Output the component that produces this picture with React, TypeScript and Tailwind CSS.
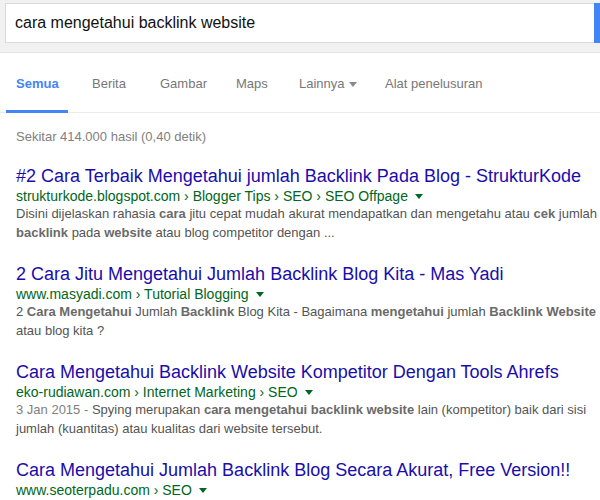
import React from "react";

const Arrow = ({ color }: { color: string }) => (
  <svg width="8" height="5" viewBox="0 0 8 5" className="inline-block">
    <path d="M0 0 L8 0 L4 5 Z" fill={color} />
  </svg>
);

const B = ({ children }: { children: React.ReactNode }) => (
  <span className="font-bold text-[#6a6a6a]">{children}</span>
);

type R = {
  title: string;
  url: string;
  lines: React.ReactNode[];
};

const results: R[] = [
  {
    title: "#2 Cara Terbaik Mengetahui jumlah Backlink Pada Blog - StrukturKode",
    url: "strukturkode.blogspot.com › Blogger Tips › SEO › SEO Offpage",
    lines: [
      <>
        Disini dijelaskan rahasia <B>cara</B> jitu cepat mudah akurat mendapatkan dan mengetahu atau <B>cek</B> jumlah
      </>,
      <>
        <B>backlink</B> pada <B>website</B> atau blog competitor dengan ...
      </>,
    ],
  },
  {
    title: "2 Cara Jitu Mengetahui Jumlah Backlink Blog Kita - Mas Yadi",
    url: "www.masyadi.com › Tutorial Blogging",
    lines: [
      <>
        2 <B>Cara Mengetahui</B> Jumlah <B>Backlink</B> Blog Kita - Bagaimana <B>mengetahui</B> jumlah <B>Backlink Website</B>
      </>,
      <>atau blog kita ?</>,
    ],
  },
  {
    title: "Cara Mengetahui Backlink Website Kompetitor Dengan Tools Ahrefs",
    url: "eko-rudiawan.com › Internet Marketing › SEO",
    lines: [
      <>
        <span className="text-[#808080]">3 Jan 2015 - </span>Spying merupakan <B>cara mengetahui backlink website</B> lain (kompetitor) baik dari sisi
      </>,
      <>jumlah (kuantitas) atau kualitas dari website tersebut.</>,
    ],
  },
  {
    title: "Cara Mengetahui Jumlah Backlink Blog Secara Akurat, Free Version!!",
    url: "www.seoterpadu.com › SEO",
    lines: [],
  },
];

const tabs = [
  { label: "Berita", w: "w-[68px]" },
  { label: "Gambar", w: "w-[76px]" },
  { label: "Maps", w: "w-[63px]" },
];

export default function App() {
  return (
    <div
      className="w-[600px] h-[500px] overflow-hidden bg-white"
      style={{ fontFamily: '"Liberation Sans", Arial, sans-serif' }}
    >
      {/* header */}
      <div className="h-[53px] bg-[#f1f1f1] border-b border-[#e5e5e5] pt-[3px] pl-[5px] flex items-start">
        <div className="flex-1 h-[40px] bg-white border border-[#d9d9d9] border-r-0 flex items-center pl-[9px] text-[16px] text-[#111]">
          cara mengetahui backlink website
        </div>
        <div className="w-[6px] h-[40px] bg-[#4285f4]" />
      </div>

      {/* tabs */}
      <div className="h-[60px] border-b border-[#ebebeb] pt-[3px] pl-[16px] flex text-[13px] text-[#777]">
        <div className="relative h-full flex items-center w-[76px]">
          <span className="font-bold text-[#4285f4]">Semua</span>
          <span className="absolute left-[-10px] bottom-[-1px] w-[62px] h-[3px] bg-[#4285f4]" />
        </div>
        {tabs.map((t) => (
          <div key={t.label} className={`h-full flex items-center ${t.w}`}>
            {t.label}
          </div>
        ))}
        <div className="h-full flex items-center w-[86px] gap-[4px]">
          Lainnya
          <Arrow color="#8a8a8a" />
        </div>
        <div className="h-full flex items-center">Alat penelusuran</div>
      </div>

      {/* results */}
      <div className="pl-[16px]">
        <div className="mt-[15px] text-[13px] leading-[18px] text-[#808080]">
          Sekitar 414.000 hasil (0,40 detik)
        </div>
        <div className="mt-[20px] flex flex-col gap-[22px]">
          {results.map((r) => (
            <div key={r.title} className="whitespace-nowrap">
              <div className="text-[18px] leading-[21px] text-[#1a0dab]">{r.title}</div>
              <div className="text-[14px] leading-[18px] text-[#006621] flex items-center gap-[7px]">
                <span>{r.url}</span>
                <Arrow color="#006621" />
              </div>
              {r.lines.map((l, i) => (
                <div key={i} className="text-[13px] leading-[18.5px] text-[#545454]">
                  {l}
                </div>
              ))}
            </div>
          ))}
        </div>
      </div>
    </div>
  );
}
